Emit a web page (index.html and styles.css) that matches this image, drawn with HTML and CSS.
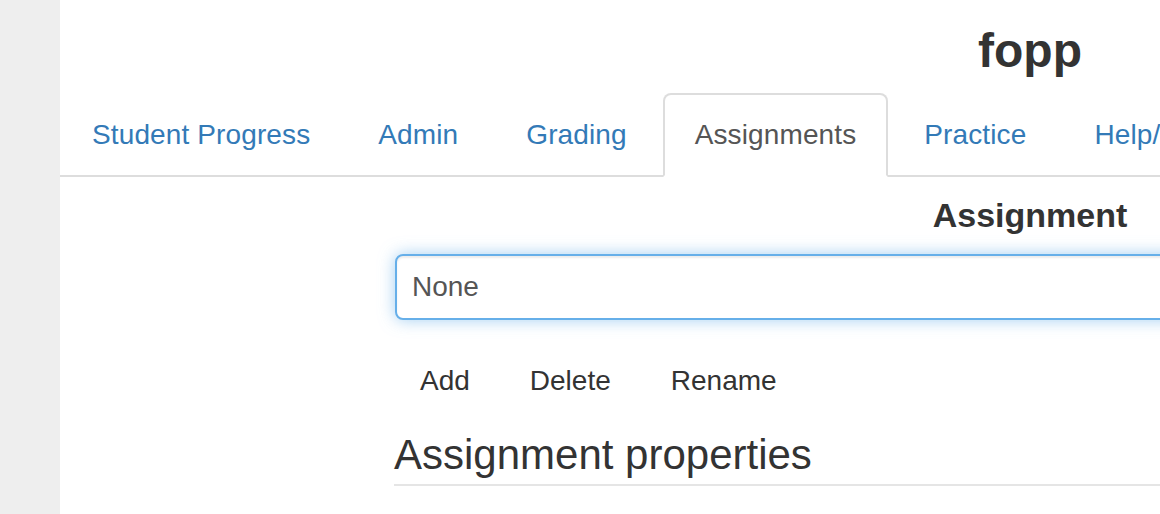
FILE: index.html
```html
<!DOCTYPE html>
<html lang="en">
<head>
<meta charset="utf-8">
<title>fopp - Assignments</title>
<link rel="stylesheet" href="styles.css">
</head>
<body>
<div class="page">
  <aside class="sidebar"></aside>
  <main class="main">
    <h1 class="course-title">fopp</h1>
    <ul class="tabs">
      <li class="tab"><a class="tab-link" href="#">Student Progress</a></li>
      <li class="tab"><a class="tab-link" href="#">Admin</a></li>
      <li class="tab"><a class="tab-link" href="#">Grading</a></li>
      <li class="tab"><a class="tab-link tab-link-active" href="#">Assignments</a></li>
      <li class="tab"><a class="tab-link" href="#">Practice</a></li>
      <li class="tab"><a class="tab-link" href="#">Help/FAQ</a></li>
    </ul>
    <h2 class="section-title">Assignment</h2>
    <div class="form-col">
      <div class="select-box">None</div>
      <div class="btn-row">
        <button class="btn" type="button">Add</button>
        <button class="btn" type="button">Delete</button>
        <button class="btn" type="button">Rename</button>
      </div>
      <div class="legend">Assignment properties</div>
    </div>
  </main>
</div>
</body>
</html>
```

FILE: styles.css
```css
html, body {
  margin: 0;
  padding: 0;
  overflow: hidden;
  background: #ffffff;
}

body {
  font-family: "Liberation Sans", Arial, sans-serif;
  color: #333333;
}

.page {
  display: flex;
  min-height: 100vh;
  width: max-content;
}

.sidebar {
  width: 60px;
  flex-shrink: 0;
  background: #eeeeee;
}

.main {
  width: 1940px;
  flex-shrink: 0;
  background: #ffffff;
  padding-top: 25px;
}

.course-title {
  margin: 0 0 16px;
  text-align: center;
  font-size: 48px;
  line-height: 52px;
  font-weight: bold;
  color: #333333;
}

.tabs {
  display: flex;
  margin: 0;
  padding: 0;
  list-style: none;
  border-bottom: 2px solid #dddddd;
}

.tab {
  margin: 0 4px -2px 0;
}

.tab-link {
  display: block;
  padding: 20px 30px;
  line-height: 40px;
  font-size: 28px;
  letter-spacing: 0.12px;
  color: #337ab7;
  text-decoration: none;
  border: 2px solid transparent;
  border-radius: 8px 8px 0 0;
  white-space: nowrap;
}

.tab-link-active {
  color: #555555;
  background: #ffffff;
  border-color: #dddddd;
  border-bottom-color: transparent;
}

.section-title {
  margin: 19px 0 0;
  text-align: center;
  font-size: 34px;
  line-height: 38px;
  font-weight: bold;
  color: #333333;
}

.form-col {
  width: 1272px;
  margin: 0 auto;
}

.select-box {
  box-sizing: border-box;
  margin-top: 20px;
  margin-left: 1px;
  height: 66px;
  padding: 0 15px;
  line-height: 62px;
  font-size: 28px;
  color: #555555;
  background: #ffffff;
  border: 2px solid #66afe9;
  border-radius: 8px;
  box-shadow: inset 0 2px 2px rgba(0, 0, 0, 0.075), 0 0 16px rgba(102, 175, 233, 0.6);
}

.btn-row {
  display: flex;
  gap: 8px;
  margin-top: 27px;
}

.btn {
  font-family: "Liberation Sans", Arial, sans-serif;
  font-size: 28px;
  line-height: 40px;
  padding: 12px 24px;
  border: 2px solid transparent;
  border-radius: 8px;
  background: transparent;
  color: #333333;
  cursor: pointer;
}

.legend {
  margin-top: 16px;
  font-size: 42px;
  line-height: 48px;
  padding-bottom: 5px;
  color: #333333;
  border-bottom: 2px solid #e5e5e5;
}
```
